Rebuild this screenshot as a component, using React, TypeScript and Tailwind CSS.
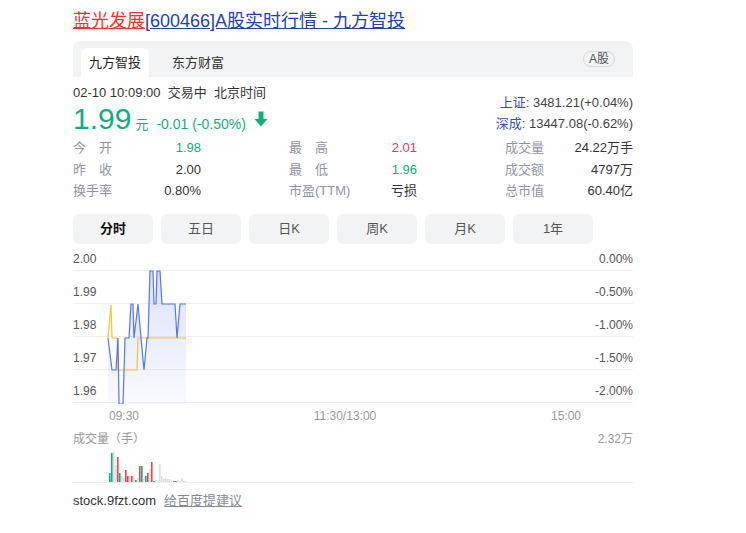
import React from 'react';

const stats = [
  ['今开', '1.98', 'text-[#14ad82]'],
  ['最高', '2.01', 'text-[#f5354c]'],
  ['成交量', '24.22万手', 'text-[#333]'],
  ['昨收', '2.00', 'text-[#333]'],
  ['最低', '1.96', 'text-[#14ad82]'],
  ['成交额', '4797万', 'text-[#333]'],
  ['换手率', '0.80%', 'text-[#333]'],
  ['市盈(TTM)', '亏损', 'text-[#333]'],
  ['总市值', '60.40亿', 'text-[#333]'],
];

const periods = ['分时', '五日', '日K', '周K', '月K', '1年'];

const rows = [
  ['2.00', '0.00%'],
  ['1.99', '-0.50%'],
  ['1.98', '-1.00%'],
  ['1.97', '-1.50%'],
  ['1.96', '-2.00%'],
];

// page coords traced from the chart, shifted into the chart box
const OX = 73;
const OY = 243;
const blue: [number, number][] = [
  [108, 337], [112, 369], [116, 369], [118, 337], [119, 403], [123, 403], [125, 337], [129, 337],
  [131, 303], [133, 303], [134, 337], [138, 303], [141, 337], [144, 369], [147, 337], [148, 337],
  [150, 270], [153, 270], [154, 303], [156, 303], [157, 270], [160, 270], [162, 303], [175, 303],
  [177, 337], [180, 303], [186, 303],
];
const avg: [number, number][] = [
  [108, 337], [111, 304], [112, 337], [117, 337], [118, 369], [137, 369], [138, 337], [186, 337],
];
const pts = (p: [number, number][]) => p.map(([x, y]) => `${x - OX},${y - OY}`).join(' ');

const G = '#14ad82';
const R = '#f2424d';
const N = '#dcdee4';
const vols: [number, string][] = [
  [9, G], [29, G], [30, N], [17, N], [25, R], [9, G], [6, N], [4, N], [12, R], [6, R],
  [6, N], [6, R], [6, N], [2, G], [4, N], [16, R], [16, G], [3, N], [6, G], [9, R],
  [13, N], [20, R], [1, G], [2, N], [2, N], [18, N], [6, N], [3, N], [4, N], [3, N],
  [3, N], [2, N], [1, R], [1, G], [2, N], [1, N], [4, N], [1, N], [1, N],
];

function Label({ text }: { text: string }) {
  if (text.length === 2) {
    return (
      <span className="flex w-[39px] justify-between">
        <span>{text[0]}</span>
        <span>{text[1]}</span>
      </span>
    );
  }
  return <span>{text}</span>;
}

export default function App() {
  return (
    <div className="min-h-screen bg-white pl-[73px] pt-[9px] font-['Arial','Liberation_Sans','Noto_Sans_CJK_SC',sans-serif] text-[#333]">
      <div className="w-[560px]">
        <h1 className="text-[18px] leading-[24px] whitespace-nowrap">
          <span className="text-[#f73131] underline">蓝光发展</span>
          <span className="text-[#2440b3] underline">[600466]A股实时行情 - 九方智投</span>
        </h1>

        <div className="mt-[8px] flex h-[36px] items-end rounded-t-[8px] bg-[#f2f3f5] px-[8px]">
          <div className="flex h-[29px] items-center rounded-t-[6px] bg-white px-[8px] text-[13px] text-[#222]">九方智投</div>
          <div className="ml-[15px] flex h-[29px] items-center px-[8px] text-[13px] text-[#333]">东方财富</div>
          <div className="mr-[10px] ml-auto flex h-[16px] w-[32px] items-center justify-center self-center rounded-full border border-[#d7d9de] text-[12px] leading-none text-[#555]">
            A股
          </div>
        </div>

        <div className="mt-[6px] flex items-end justify-between">
          <div>
            <div className="text-[13px] leading-[20px] text-[#333]">02-10 10:09:00&nbsp;&nbsp;交易中&nbsp;&nbsp;北京时间</div>
            <div className="flex h-[32px] items-baseline text-[#14ad82]">
              <span className="text-[30px] leading-[32px]">1.99</span>
              <span className="ml-[4px] text-[13px]">元</span>
              <span className="ml-[8px] text-[14px]">-0.01 (-0.50%)</span>
              <svg className="ml-[8px] self-center" width="14" height="16" viewBox="0 0 14 16">
                <path d="M4.5 0.5h5v7.5h4L7 15.5 0.5 8h4z" fill="#14ad82" />
              </svg>
            </div>
          </div>
          <div className="pb-[1px] text-right text-[13px] leading-[21px] text-[#444]">
            <div>
              <span className="text-[#3c4bb5]">上证</span>: 3481.21(+0.04%)
            </div>
            <div>
              <span className="text-[#3c4bb5]">深成</span>: 13447.08(-0.62%)
            </div>
          </div>
        </div>

        <div className="mt-[2px] grid grid-cols-3 gap-x-[88px] text-[13px] leading-[21.5px]">
          {stats.map(([k, v, c]) => (
            <div key={k} className="flex justify-between">
              <span className="text-[#9195a3]">
                <Label text={k} />
              </span>
              <span className={c}>{v}</span>
            </div>
          ))}
        </div>

        <div className="mt-[12px] flex gap-[8px]">
          {periods.map((p, i) => (
            <div
              key={p}
              className={`flex h-[30px] w-[80px] items-center justify-center rounded-[6px] bg-[#f2f3f5] text-[13px] ${
                i === 0 ? 'font-bold text-[#111]' : 'text-[#555]'
              }`}
            >
              {p}
            </div>
          ))}
        </div>

        <div className="relative">
          {rows.map(([l, r], i) => (
            <div
              key={l}
              className={`flex items-end justify-between border-b border-[#efefef] pb-[3px] text-[12px] leading-[16px] text-[#555] ${
                i === 0 ? 'h-[27px]' : 'h-[33px]'
              }`}
            >
              <span>{l}</span>
              <span>{r}</span>
            </div>
          ))}
          <svg className="pointer-events-none absolute top-0 left-0" width="560" height="160">
            <defs>
              <linearGradient id="fill" x1="0" y1="0" x2="0" y2="1">
                <stop offset="0" stopColor="#5b78ee" stopOpacity="0.22" />
                <stop offset="1" stopColor="#5b78ee" stopOpacity="0.02" />
              </linearGradient>
            </defs>
            <polygon points={`${pts(blue)} ${186 - OX},${412 - OY} ${108 - OX},${412 - OY}`} fill="url(#fill)" />
            <polyline points={pts(avg)} fill="none" stroke="#fbc02d" strokeWidth="1.2" />
            <polyline points={pts(blue)} fill="none" stroke="#5675f0" strokeWidth="1.2" />
          </svg>
        </div>

        <div className="flex w-[508px] justify-between pt-[5px] pl-[36px] text-[12px] leading-[16px] text-[#999]">
          <span>09:30</span>
          <span>11:30/13:00</span>
          <span>15:00</span>
        </div>

        <div className="mt-[5px] flex justify-between text-[12px] leading-[20px] text-[#999]">
          <span>成交量（手）</span>
          <span>2.32万</span>
        </div>

        <div className="h-[34px] border-b border-[#ececec]">
          <svg width="560" height="33">
            {vols.map(([h, c], i) => (
              <rect key={i} x={36 + i * 2} y={33 - h} width="1.6" height={h} fill={c} />
            ))}
          </svg>
        </div>

        <div className="mt-[8px] flex gap-[8px] text-[13px] leading-[20px]">
          <span className="text-[#333]">stock.9fzt.com</span>
          <span className="text-[#858a96] underline">给百度提建议</span>
        </div>
      </div>
    </div>
  );
}
